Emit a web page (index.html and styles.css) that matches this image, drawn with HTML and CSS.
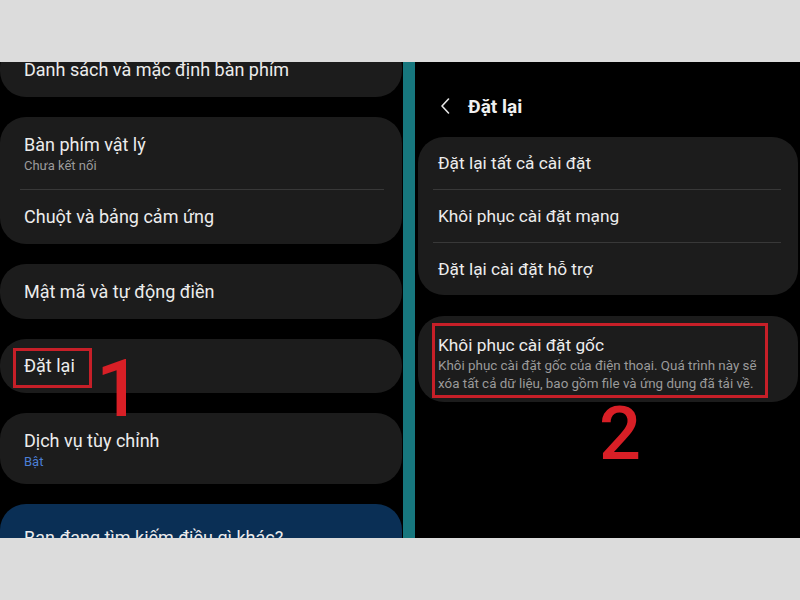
FILE: index.html
```html
<!DOCTYPE html>
<html lang="vi">
<head>
<meta charset="utf-8">
<title>Đặt lại</title>
<link rel="stylesheet" href="styles.css">
</head>
<body>
<div class="stage">
  <section class="left">
    <div class="card card-first">
      <div class="item h55"><span class="title">Danh sách và mặc định bàn phím</span></div>
    </div>
    <div class="card">
      <div class="item h72 two">
        <span class="title">Bàn phím vật lý</span>
        <span class="sub">Chưa kết nối</span>
      </div>
      <div class="divider-l"></div>
      <div class="item h54"><span class="title">Chuột và bảng cảm ứng</span></div>
    </div>
    <div class="card">
      <div class="item h55"><span class="title">Mật mã và tự động điền</span></div>
    </div>
    <div class="card">
      <div class="item h54"><span class="title">Đặt lại</span></div>
    </div>
    <div class="card">
      <div class="item h71 two">
        <span class="title">Dịch vụ tùy chỉnh</span>
        <span class="sub blue">Bật</span>
      </div>
    </div>
    <div class="card card-blue">
      <div class="item-top"><span class="title">Bạn đang tìm kiếm điều gì khác?</span></div>
    </div>
    <div class="mark mark-1"></div>
    <span class="num num-1">1</span>
  </section>
  <div class="strip"></div>
  <section class="right">
    <header class="head">
      <svg class="chev" width="10" height="16" viewBox="0 0 10 16"><path d="M8.5 1 L2 8 L8.5 15" fill="none" stroke="#e6e6e6" stroke-width="1.6" stroke-linecap="round" stroke-linejoin="round"/></svg>
      <span class="head-title">Đặt lại</span>
    </header>
    <div class="card rcard">
      <div class="ritem"><span class="title r">Đặt lại tất cả cài đặt</span></div>
      <div class="divider-r"></div>
      <div class="ritem"><span class="title r">Khôi phục cài đặt mạng</span></div>
      <div class="divider-r"></div>
      <div class="ritem"><span class="title r">Đặt lại cài đặt hỗ trợ</span></div>
    </div>
    <div class="card rcard rcard-b">
      <span class="title r">Khôi phục cài đặt gốc</span>
      <span class="desc">Khôi phục cài đặt gốc của điện thoại. Quá trình này sẽ xóa tất cả dữ liệu, bao gồm file và ứng dụng đã tải về.</span>
    </div>
    <div class="mark mark-2"></div>
    <span class="num num-2">2</span>
  </section>
</div>
</body>
</html>
```

FILE: styles.css
```css
html, body {
  margin: 0;
  padding: 0;
  background: #dcdcdc;
}
body {
  width: 800px;
  height: 600px;
  overflow: hidden;
  font-family: Roboto, "Noto Sans", "Liberation Sans", sans-serif;
  color: #ededed;
}
.stage {
  margin-top: 62px;
  height: 476px;
  display: flex;
  overflow: hidden;
}
.left {
  position: relative;
  width: 403px;
  flex: none;
  background: #000;
  overflow: hidden;
  display: flex;
  flex-direction: column;
  gap: 20px;
}
.strip {
  width: 12px;
  flex: none;
  background: #17777e;
}
.right {
  position: relative;
  flex: 1;
  background: #000;
  padding: 0 2px 0 3px;
  overflow: hidden;
}
.card {
  background: #1c1c1c;
  border-radius: 26px;
  flex: none;
}
.left .card {
  width: 402px;
}
.card-first {
  margin-top: -20px;
}
.card-blue {
  background: #0a2f55;
  height: 90px;
}
.item {
  display: flex;
  flex-direction: column;
  justify-content: center;
  padding: 0 24px;
  box-sizing: border-box;
}
.item.two {
  justify-content: flex-start;
  padding-top: 16px;
}
.h54 { height: 54px; }
.h55 { height: 55px; }
.h71 { height: 71px; }
.h72 { height: 72px; }
.item-top {
  padding: 22px 24px 0;
}
.title {
  font-size: 18px;
  line-height: 24px;
  color: #ececec;
  white-space: nowrap;
}
.sub {
  font-size: 13px;
  line-height: 16px;
  color: #9b9b9b;
  margin-top: 1px;
}
.sub.blue {
  color: #4b7fd6;
}
.divider-l {
  height: 1px;
  background: #383838;
  margin: 0 18px 0 20px;
}
.head {
  height: 75px;
  box-sizing: border-box;
  padding: 13px 0 0 22px;
  display: flex;
  align-items: center;
  gap: 18px;
}
.head-title {
  font-size: 19px;
  font-weight: 700;
  color: #f0f0f0;
}
.rcard {
  display: flex;
  flex-direction: column;
}
.ritem {
  height: 52px;
  display: flex;
  align-items: center;
  padding-left: 20px;
}
.title.r {
  font-size: 17.3px;
}
.divider-r {
  height: 1px;
  background: #383838;
  margin: 0 17px 0 15px;
}
.rcard-b {
  margin-top: 21px;
  height: 86px;
  box-sizing: border-box;
  padding: 17px 30px 0 20px;
}
.desc {
  display: block;
  font-size: 13.4px;
  line-height: 18px;
  color: #9a9a9a;
}
.mark {
  position: absolute;
  border: 3px solid #c61f28;
  box-sizing: border-box;
}
.mark-1 {
  left: 13px;
  top: 286px;
  width: 79px;
  height: 40px;
}
.mark-2 {
  left: 17px;
  top: 261px;
  width: 336px;
  height: 75px;
}
.num {
  position: absolute;
  color: #d81f26;
  font-family: Roboto, "Liberation Sans", sans-serif;
  font-weight: 500;
  line-height: 1;
}
.num-1 {
  left: 96px;
  top: 287px;
  font-size: 80px;
}
.num-2 {
  left: 184px;
  top: 335px;
  font-size: 74px;
}
```
